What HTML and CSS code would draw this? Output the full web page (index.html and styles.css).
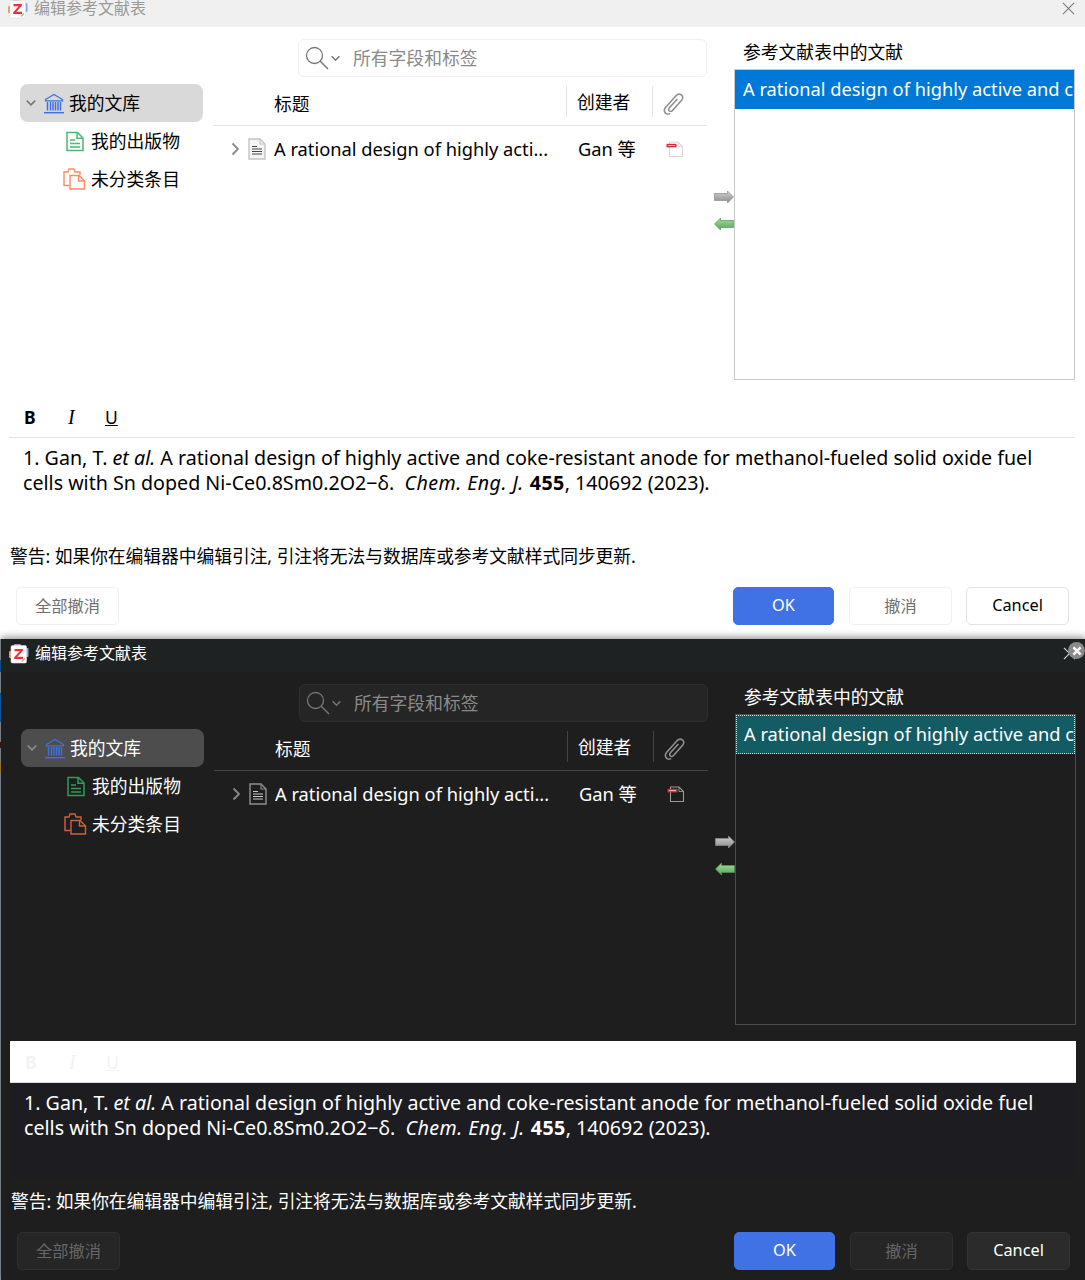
FILE: index.html
```html
<!DOCTYPE html>
<html lang="zh">
<head>
<meta charset="utf-8">
<title>编辑参考文献表</title>
<link rel="stylesheet" href="styles.css">
</head>
<body>
<svg class="defs" width="0" height="0" aria-hidden="true">
  <defs>
    <linearGradient id="g-gray" x1="0" y1="0" x2="0" y2="1">
      <stop offset="0" stop-color="#d2d2d2"/>
      <stop offset="1" stop-color="#8a8a8a"/>
    </linearGradient>
    <linearGradient id="g-green" x1="0" y1="0" x2="0" y2="1">
      <stop offset="0" stop-color="#a9dca2"/>
      <stop offset="1" stop-color="#55a557"/>
    </linearGradient>
    <symbol id="i-logo" viewBox="0 0 20 20">
      <rect x="0" y="7" width="5" height="7" rx="1" fill="#e9966b"/>
      <rect x="5" y="0" width="7" height="4" rx="1" fill="#d77fb4"/>
      <rect x="15" y="4" width="4.500" height="9" rx="1" fill="#8fa6e6"/>
      <rect x="2" y="1.500" width="15.500" height="17.500" rx="1.500" fill="#fff" stroke="#ddd" stroke-width=".6"/>
      <path d="M5.500 5h8.400v1.700L8.400 12.800h5.600V15H5.200v-1.700L10.700 7.200H5.500z" fill="#e6333f"/>
      <path d="M13 17.500l3-3" stroke="#b9b08a" stroke-width="1.200"/>
    </symbol>
    <symbol id="i-search" viewBox="0 0 24 24">
      <circle cx="9.500" cy="9.500" r="8" fill="none" stroke="currentColor" stroke-width="1.300"/>
      <path d="M15 15l8 8" stroke="currentColor" stroke-width="1.500" fill="none"/>
    </symbol>
    <symbol id="i-chev-down" viewBox="0 0 10 10">
      <path d="M1.500 3l3.500 3.500L8.500 3" fill="none" stroke="currentColor" stroke-width="1.300"/>
    </symbol>
    <symbol id="i-chev-right" viewBox="0 0 10 14">
      <path d="M2.500 1.500L8 7l-5.500 5.500" fill="none" stroke="currentColor" stroke-width="1.800"/>
    </symbol>
    <symbol id="i-lib" viewBox="0 0 20 20">
      <path d="M1.500 6l8.500-5 8.500 5v1.300H1.500z" fill="none" stroke="currentColor" stroke-width="1.300"/>
      <path d="M3.500 8.500v8.500M6.500 8.500v8.500M9 8.500v8.500M11.500 8.500v8.500M14 8.500v8.500M16.500 8.500v8.500" stroke="currentColor" stroke-width="1.500"/>
      <path d="M0 19.200h20" stroke="currentColor" stroke-width="1.500"/>
    </symbol>
    <symbol id="i-pub" viewBox="0 0 18 20">
      <path d="M1 1h10.500l5.500 5.500V19H1z" fill="none" stroke="currentColor" stroke-width="1.500"/>
      <path d="M11 1v5.800h6M4 8.500h5M4 12h10M4 15.500h10" fill="none" stroke="currentColor" stroke-width="1.500"/>
    </symbol>
    <symbol id="i-unfiled" viewBox="0 0 23 22">
      <path d="M6.500 17.500H1V4h4l1-3h5l1 3h5v3" fill="none" stroke="currentColor" stroke-width="1.400"/>
      <path d="M7 7.500h9l5.500 5.500v8H7z" fill="none" stroke="currentColor" stroke-width="1.400"/>
      <path d="M15.500 7.500V13h6" fill="none" stroke="currentColor" stroke-width="1.400"/>
    </symbol>
    <symbol id="i-doc" viewBox="0 0 18 22">
      <path d="M1 1h11l5 5v15H1z" fill="var(--doc-fill)" stroke="var(--doc-line)" stroke-width="1.400"/>
      <path d="M12 1v5h5" fill="none" stroke="var(--doc-line)" stroke-width="1.100"/>
      <path d="M4 8.500h5M4 11h10M4 13.500h10M4 16h10" stroke="var(--fg-soft)" stroke-width="1.100"/>
    </symbol>
    <symbol id="i-clip" viewBox="0 0 22 22">
      <path d="M7 20.500c-1.700 1-4 .6-5-1-1-1.600-.7-3.500.5-5L13 2.800c1.500-1.600 3.600-2.200 5.300-1 1.800 1.300 1.900 3.600.5 5.300L9.500 17.500c-1 1-2.200 1.300-3.200.5-1-.8-.8-2.100.1-3.200l8-8.800" fill="none" stroke="currentColor" stroke-width="1.600"/>
    </symbol>
    <symbol id="i-pdf" viewBox="0 0 18 16">
      <path d="M3.500 1h8.500l4.500 4.500v10h-13z" fill="var(--pdf-fill)" stroke="var(--pdf-line)" stroke-width="1.100"/>
      <path d="M12 1v4.500h4.500" fill="none" stroke="var(--pdf-line)" stroke-width=".9"/>
      <rect x="0.500" y="2.800" width="10" height="3.600" fill="#d5303e"/>
      <rect x="2" y="4" width="7" height="1.100" fill="#f1a9ae"/>
    </symbol>
    <symbol id="i-right" viewBox="0 0 20 14">
      <path d="M.5 3.500h13V1L19.500 7l-6 6v-2.500H.5z" fill="url(#g-gray)" stroke="#8c8c8c" stroke-width=".7"/>
    </symbol>
    <symbol id="i-left" viewBox="0 0 20 14">
      <path d="M19.500 3.500H6.500V1L.5 7l6 6v-2.500h13z" fill="url(#g-green)" stroke="#4f9a52" stroke-width=".7"/>
    </symbol>
    <symbol id="i-x" viewBox="0 0 14 14">
      <path d="M1 1l12 12M13 1L1 13" fill="none" stroke="currentColor" stroke-width="1.100"/>
    </symbol>
    <symbol id="i-xbold" viewBox="0 0 14 14">
      <path d="M2 2l10 10M12 2L2 12" fill="none" stroke="currentColor" stroke-width="3.400"/>
    </symbol>
  </defs>
</svg>

<section class="dialog light">
  <header class="titlebar">
    <svg class="logo"><use href="#i-logo"/></svg>
    <span class="title">编辑参考文献表</span>
    <svg class="close"><use href="#i-x"/></svg>
  </header>
  <div class="main">
    <nav class="tree">
      <div class="tree-row selected"><svg class="twisty"><use href="#i-chev-down"/></svg><svg class="ico lib"><use href="#i-lib"/></svg><span>我的文库</span></div>
      <div class="tree-row sub"><svg class="ico pub"><use href="#i-pub"/></svg><span>我的出版物</span></div>
      <div class="tree-row sub"><svg class="ico unfiled"><use href="#i-unfiled"/></svg><span>未分类条目</span></div>
    </nav>
    <div class="center">
      <div class="search"><svg class="s-ico"><use href="#i-search"/></svg><svg class="s-chev"><use href="#i-chev-down"/></svg><span class="placeholder">所有字段和标签</span></div>
      <div class="thead">
        <span class="col-title">标题</span>
        <span class="col-creator">创建者</span>
        <span class="col-attach"><svg class="clip"><use href="#i-clip"/></svg></span>
      </div>
      <div class="trow">
        <svg class="row-twisty"><use href="#i-chev-right"/></svg>
        <svg class="doc"><use href="#i-doc"/></svg>
        <span class="cell-title">A rational design of highly acti...</span>
        <span class="cell-creator">Gan 等</span>
        <span class="cell-attach"><svg class="pdf"><use href="#i-pdf"/></svg></span>
      </div>
    </div>
    <div class="arrows">
      <svg class="arrow"><use href="#i-right"/></svg>
      <svg class="arrow"><use href="#i-left"/></svg>
    </div>
    <div class="cited">
      <div class="cited-head">参考文献表中的文献</div>
      <div class="cited-list"><div class="cited-item">A rational design of highly active and coke-resistant anode</div></div>
    </div>
  </div>
  <div class="toolbar"><b class="tb-b">B</b><i class="tb-i">I</i><u class="tb-u">U</u></div>
  <div class="editor">1. Gan, T. <i>et al.</i> A rational design of highly active and coke-resistant anode for methanol-fueled solid oxide fuel cells with Sn doped Ni-Ce0.8Sm0.2O2−δ. <i class="journal">Chem. Eng. J.</i> <b class="volume">455</b>, 140692 (2023).</div>
  <p class="warning">警告: 如果你在编辑器中编辑引注, 引注将无法与数据库或参考文献样式同步更新.</p>
  <footer class="buttons">
    <button class="btn disabled">全部撤消</button>
    <span class="spacer"></span>
    <button class="btn primary">OK</button>
    <button class="btn disabled">撤消</button>
    <button class="btn">Cancel</button>
  </footer>
</section>

<section class="dialog dark">
  <header class="titlebar">
    <svg class="logo"><use href="#i-logo"/></svg>
    <span class="title">编辑参考文献表</span>
    <svg class="close"><use href="#i-x"/></svg>
    <span class="shot-close"><svg><use href="#i-xbold"/></svg></span>
  </header>
  <div class="main">
    <nav class="tree">
      <div class="tree-row selected"><svg class="twisty"><use href="#i-chev-down"/></svg><svg class="ico lib"><use href="#i-lib"/></svg><span>我的文库</span></div>
      <div class="tree-row sub"><svg class="ico pub"><use href="#i-pub"/></svg><span>我的出版物</span></div>
      <div class="tree-row sub"><svg class="ico unfiled"><use href="#i-unfiled"/></svg><span>未分类条目</span></div>
    </nav>
    <div class="center">
      <div class="search"><svg class="s-ico"><use href="#i-search"/></svg><svg class="s-chev"><use href="#i-chev-down"/></svg><span class="placeholder">所有字段和标签</span></div>
      <div class="thead">
        <span class="col-title">标题</span>
        <span class="col-creator">创建者</span>
        <span class="col-attach"><svg class="clip"><use href="#i-clip"/></svg></span>
      </div>
      <div class="trow">
        <svg class="row-twisty"><use href="#i-chev-right"/></svg>
        <svg class="doc"><use href="#i-doc"/></svg>
        <span class="cell-title">A rational design of highly acti...</span>
        <span class="cell-creator">Gan 等</span>
        <span class="cell-attach"><svg class="pdf"><use href="#i-pdf"/></svg></span>
      </div>
    </div>
    <div class="arrows">
      <svg class="arrow"><use href="#i-right"/></svg>
      <svg class="arrow"><use href="#i-left"/></svg>
    </div>
    <div class="cited">
      <div class="cited-head">参考文献表中的文献</div>
      <div class="cited-list"><div class="cited-item">A rational design of highly active and coke-resistant anode</div></div>
    </div>
  </div>
  <div class="toolbar"><b class="tb-b">B</b><i class="tb-i">I</i><u class="tb-u">U</u></div>
  <div class="editor">1. Gan, T. <i>et al.</i> A rational design of highly active and coke-resistant anode for methanol-fueled solid oxide fuel cells with Sn doped Ni-Ce0.8Sm0.2O2−δ. <i class="journal">Chem. Eng. J.</i> <b class="volume">455</b>, 140692 (2023).</div>
  <p class="warning">警告: 如果你在编辑器中编辑引注, 引注将无法与数据库或参考文献样式同步更新.</p>
  <footer class="buttons">
    <button class="btn disabled">全部撤消</button>
    <span class="spacer"></span>
    <button class="btn primary">OK</button>
    <button class="btn disabled">撤消</button>
    <button class="btn">Cancel</button>
  </footer>
</section>
</body>
</html>
```
FILE: styles.css
```css
* { box-sizing: border-box; }
html, body { margin: 0; padding: 0; }
body {
  width: 1085px;
  height: 1280px;
  overflow: hidden;
  background-color: #fff;
  background-image: linear-gradient(#8f9ba0 0, #8f9ba0 21px, #0a5aa8 21px, #0a5aa8 33px, #8f9ba0 33px, #8f9ba0 54px, #0a68c0 54px, #0a68c0 83px, #8f9ba0 83px, #8f9ba0 103px, #5a1010 103px, #5a1010 109px, #8f9ba0 109px, #8f9ba0 123px, #b98a30 123px, #b98a30 134px, #8f9ba0 134px);
  background-size: 1px 641px;
  background-position: 0 639px;
  background-repeat: no-repeat;
  font-family: "Noto Sans", "Noto Sans CJK SC", sans-serif;
  font-size: 18px;
}
.defs { display: block; height: 0; }

.light {
  --bg: #fff; --title-bg: #f0f0f0; --title-fg: #999; --fg: #000; --fg-soft: #444;
  --muted: #777; --line: #e3e3e3; --sel: #d9d9d9; --search-bg: #fff; --search-bd: #efefef;
  --placeholder: #8a8a8a; --list-bd: #c9c9c9; --item-bg: #0078d7; --item-outline: transparent;
  --tb-bg: #fff; --tb-fg: #000; --editor-bg: #fff;
  --dis-bg: #fff; --dis-bd: #efefef; --dis-fg: #6f6f6f; --btn-bg: #fff; --btn-bd: #e3e3e3;
  --lib: #3f6fe0; --pub: #46bd70; --unfiled: #ff8a63; --close: #777;
  --doc-fill: #f4f4f4; --doc-line: #c4c4c4; --pdf-fill: #fff; --pdf-line: #d8d8d8;
}
.dark {
  --bg: #1e1e1e; --title-bg: #1f2223; --title-fg: #fff; --fg: #fff; --fg-soft: #c8c8c8;
  --muted: #8c8c8c; --line: #444; --sel: #4d4d4d; --search-bg: #252525; --search-bd: #2e2e2e;
  --placeholder: #8a8a8a; --list-bd: #4c4c4c; --item-bg: #135c64; --item-outline: #cfe3e3;
  --tb-bg: #fff; --tb-fg: #f3f3f3; --editor-bg: #1c1c21;
  --dis-bg: #262626; --dis-bd: #2f2f2f; --dis-fg: #666; --btn-bg: #2b2b2b; --btn-bd: #333;
  --lib: #3f6fe0; --pub: #2f9c58; --unfiled: #d0613c; --close: #ddd;
  --doc-fill: #1e1e1e; --doc-line: #8f8f8f; --pdf-fill: transparent; --pdf-line: #9a9a9a;
}

.dialog {
  width: 1085px;
  height: 642px;
  background: var(--bg);
  color: var(--fg);
  display: flex;
  flex-direction: column;
  flex: none;
}
.light { margin-top: -6px; }
.dark {
  margin-left: 1px;
  margin-top: 3px;
  box-shadow: 0 -2px 7px rgba(0, 0, 0, .42);
}

/* title bar */
.titlebar {
  position: relative;
  height: 33px;
  flex: none;
  background: var(--title-bg);
  color: var(--title-fg);
  display: flex;
  align-items: center;
  padding: 0 10px 0 8px;
}
.logo { width: 20px; height: 20px; flex: none; margin-top: -4px; }
.title { font-size: 16px; margin-left: 6px; line-height: 20px; margin-top: -5px; }
.close { width: 13px; height: 13px; margin-left: auto; color: var(--close); margin-top: -4px; }
.shot-close {
  position: absolute;
  right: 1px;
  top: 3px;
  width: 17px;
  height: 17px;
  border-radius: 50%;
  background: #8a8a8a;
  color: #fff;
  display: flex;
  align-items: center;
  justify-content: center;
}
.shot-close svg { width: 10px; height: 10px; }

/* main columns */
.main {
  height: 353px;
  flex: none;
  display: grid;
  grid-template-columns: 183px 504px 27px 341px;
  column-gap: 0;
  padding-left: 20px;
}
.tree { padding-top: 57px; }
.tree-row {
  height: 38px;
  display: flex;
  align-items: center;
  font-size: 17.8px;
  border-radius: 8px;
  white-space: nowrap;
}
.tree-row span { margin-top: -3px; }
.tree-row.selected span { margin-left: -1px; }
.tree-row.sub span { margin-left: -1px; }
.tree-row.selected { background: var(--sel); padding-left: 5px; }
.tree-row.sub { padding-left: 43px; }
.twisty { width: 12px; height: 12px; color: var(--muted); flex: none; }
.ico { flex: none; }
.lib { width: 20px; height: 21px; color: var(--lib); margin: 0 6px 0 7px; }
.pub { width: 18px; height: 21px; color: var(--pub); margin-left: 3px; margin-right: 8px; }
.unfiled { width: 23px; height: 22px; color: var(--unfiled); margin-right: 6px; }

.center { margin-left: 10px; padding-top: 12px; }
.search {
  height: 38px;
  margin-left: 85px;
  background: var(--search-bg);
  border: 1px solid var(--search-bd);
  border-radius: 6px;
  display: flex;
  align-items: center;
  padding-left: 6px;
}
.s-ico { width: 24px; height: 24px; color: #777; flex: none; }
.s-chev { width: 11px; height: 11px; color: #777; margin-left: 1px; flex: none; }
.placeholder { color: var(--placeholder); font-size: 17.8px; margin-left: 12px; margin-top: -2px; }

.thead {
  height: 43px;
  margin-top: 6px;
  border-bottom: 1px solid var(--line);
  display: grid;
  grid-template-columns: 353px 86px 55px;
  align-items: center;
  font-size: 17.8px;
}
.col-title { padding-left: 61px; margin-bottom: 3px; }
.col-creator, .col-attach {
  border-left: 1px solid var(--line);
  height: 31px;
  margin-bottom: 6px;
  display: flex;
  align-items: center;
  padding-left: 10px;
}
.col-creator { line-height: 36px; padding-top: 2px; }
.clip { width: 22px; height: 22px; color: #8f8f8f; margin-top: 6px; }

.trow {
  height: 46px;
  display: grid;
  grid-template-columns: 35px 26px 304px 87px 42px;
  align-items: center;
  font-size: 18.3px;
  white-space: nowrap;
}
.row-twisty { width: 10px; height: 14px; color: #8a8a8a; margin-left: 17px; }
.doc { width: 18px; height: 22px; }
.pdf { width: 18px; height: 16px; }
.cell-title, .cell-creator { margin-top: -2px; }
.cell-attach { display: flex; margin-left: 1px; }

.arrows {
  padding-top: 163px;
  padding-left: 7px;
  display: flex;
  flex-direction: column;
  gap: 13px;
}
.arrow { width: 20px; height: 14px; flex: none; }

.cited { display: flex; flex-direction: column; height: 353px; min-width: 0; }
.cited-head {
  height: 42px;
  padding: 8px 0 0 9px;
  font-size: 17.8px;
  line-height: 34px;
}
.cited-list {
  height: 311px;
  border: 1px solid var(--list-bd);
  overflow: hidden;
}
.cited-item {
  height: 39px;
  background: var(--item-bg);
  color: #fff;
  font-size: 18.3px;
  line-height: 37px;
  padding-left: 8px;
  white-space: nowrap;
  overflow: hidden;
  outline: 1px dotted var(--item-outline);
  outline-offset: -1px;
}

/* toolbar + editor */
.toolbar {
  height: 42px;
  margin: 16px 10px 0 9px;
  flex: none;
  background: var(--tb-bg);
  color: var(--tb-fg);
  border-bottom: 1px solid var(--line);
  display: flex;
  align-items: center;
  padding-top: 1px;
  font-size: 17.5px;
}
.dark .toolbar { border-bottom-color: #ddd; }
.tb-b { width: 15px; margin-left: 15px; }
.tb-i { width: 12px; margin-left: 29px; font-family: "Liberation Serif", serif; font-size: 20px; }
.tb-u { margin-left: 25px; }
.editor {
  height: 95px;
  margin: 0 10px 0 9px;
  padding: 7px 14px 0 14px;
  flex: none;
  background: var(--editor-bg);
  font-size: 19.65px;
  line-height: 25px;
}
.journal { letter-spacing: .45px; margin-left: 5px; }
.volume { letter-spacing: .4px; margin-left: 1px; }
.warning {
  margin: 0;
  flex: none;
  height: 54px;
  padding: 8px 0 0 10px;
  font-size: 17.8px;
  line-height: 30px;
  white-space: nowrap;
  letter-spacing: -.06px;
}

/* buttons */
.buttons {
  display: flex;
  flex: none;
  height: 38px;
  padding-left: 16px;
  padding-right: 16px;
  gap: 14px;
}
.spacer { flex: 1; }
.btn {
  font: inherit;
  font-size: 16.3px;
  width: 103px;
  height: 38px;
  padding: 0 0 2px;
  border-radius: 5px;
  border: 1px solid var(--btn-bd);
  background: var(--btn-bg);
  color: var(--fg);
}
.btn.disabled { background: var(--dis-bg); border-color: var(--dis-bd); color: var(--dis-fg); }
.btn.primary { background: #4072e5; border-color: #4072e5; color: #fff; width: 101px; margin-right: 1px; margin-left: -1px; }
```
